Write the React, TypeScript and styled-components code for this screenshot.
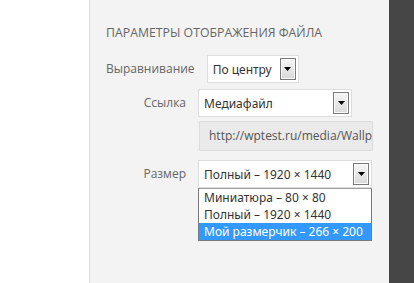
import React from "react";
import styled, { createGlobalStyle } from "styled-components";

const GlobalStyle = createGlobalStyle`
  html, body {
    margin: 0;
    padding: 0;
    background: #ffffff;
  }
  body {
    font-family: "Open Sans", "Noto Sans", sans-serif;
  }
`;

const sizes = [
  "Миниатюра – 80 × 80",
  "Полный – 1920 × 1440",
  "Мой размерчик – 266 × 200",
];

const App = () => {
  return (
    <>
      <GlobalStyle />
      <Page>
        <Blank />
        <Sidebar>
          <Title>Параметры отображения файла</Title>
          <Setting $top={15}>
            <Label $min={80}>Выравнивание</Label>
            <Select $width={92}>
              <Value>По центру</Value>
              <ArrowButton />
            </Select>
          </Setting>
          <Setting $top={6}>
            <Label $min={80}>Ссылка</Label>
            <Select $width={154}>
              <Value>Медиафайл</Value>
              <ArrowButton />
            </Select>
          </Setting>
          <UrlField>http://wptest.ru/media/Wallpaper-1920x1440.jpg</UrlField>
          <Setting $top={9}>
            <Label $min={80}>Размер</Label>
            <DropWrap>
              <Select $width={174}>
                <Value>Полный – 1920 × 1440</Value>
                <ArrowButton />
              </Select>
              <OptionList>
                {sizes.map((s, i) => (
                  <OptionItem key={s} $active={i === sizes.length - 1}>
                    {s}
                  </OptionItem>
                ))}
              </OptionList>
            </DropWrap>
          </Setting>
        </Sidebar>
        <Backdrop />
      </Page>
    </>
  );
};

const ArrowButton = () => (
  <Arrow>
    <svg width="7" height="4" viewBox="0 0 7 4">
      <path d="M0 0 H7 L3.5 4 Z" fill="#000" />
    </svg>
  </Arrow>
);

export default App;

const Page = styled.div`
  display: flex;
  width: 414px;
  height: 283px;
  overflow: hidden;
`;

const Blank = styled.div`
  width: 89px;
  flex-shrink: 0;
  background: #ffffff;
`;

const Sidebar = styled.div`
  width: 283px;
  flex-shrink: 0;
  background: #f3f3f3;
  border-left: 1px solid #dddddd;
  padding: 26px 0 0 16px;
  display: flex;
  flex-direction: column;
  overflow: hidden;
`;

const Backdrop = styled.div`
  flex: 1;
  background: #464646;
`;

const Title = styled.h3`
  margin: 0;
  font-size: 12.3px;
  font-weight: 400;
  line-height: 14px;
  text-transform: uppercase;
  color: #666666;
  white-space: nowrap;
`;

const Setting = styled.div<{ $top: number }>`
  display: flex;
  align-items: flex-start;
  margin-top: ${(p) => p.$top}px;
`;

const Label = styled.span<{ $min: number }>`
  min-width: ${(p) => p.$min}px;
  margin-right: 12px;
  text-align: right;
  font-size: 12px;
  line-height: 28px;
  color: #666666;
  white-space: nowrap;
`;

const Select = styled.div<{ $width: number }>`
  box-sizing: border-box;
  width: ${(p) => p.$width}px;
  height: 28px;
  display: flex;
  align-items: center;
  justify-content: space-between;
  padding: 0 2px 0 5px;
  background: #ffffff;
  border: 1px solid #dddddd;
`;

const Value = styled.span`
  font-family: "Noto Sans", "Open Sans", sans-serif;
  font-size: 12px;
  color: #333333;
  white-space: nowrap;
`;

const Arrow = styled.span`
  box-sizing: border-box;
  width: 16px;
  height: 22px;
  display: flex;
  align-items: center;
  justify-content: center;
  border: 1px solid #7a7a7a;
  box-shadow: inset 0 0 0 1px #fafafa;
  background: linear-gradient(#f6f6f6, #d9d9d9);
`;

const UrlField = styled.div`
  box-sizing: border-box;
  margin: 4px 0 0 93px;
  width: 174px;
  height: 30px;
  padding: 0 0 0 9px;
  background: #eaeaea;
  border: 1px solid #dedede;
  font-size: 12px;
  line-height: 28px;
  color: #555555;
  white-space: nowrap;
  overflow: hidden;
`;

const DropWrap = styled.div`
  display: flex;
  flex-direction: column;
`;

const OptionList = styled.div`
  box-sizing: border-box;
  width: 174px;
  border: 1px solid #7a7a7a;
  border-top-color: #a0a0a0;
  background: #ffffff;
  overflow: hidden;
`;

const OptionItem = styled.div<{ $active?: boolean }>`
  height: 17px;
  padding-left: 5px;
  font-family: "Noto Sans", "Open Sans", sans-serif;
  font-size: 12px;
  line-height: 17px;
  white-space: nowrap;
  color: ${(p) => (p.$active ? "#ffffff" : "#333333")};
  background: ${(p) => (p.$active ? "#3399ff" : "transparent")};
`;
